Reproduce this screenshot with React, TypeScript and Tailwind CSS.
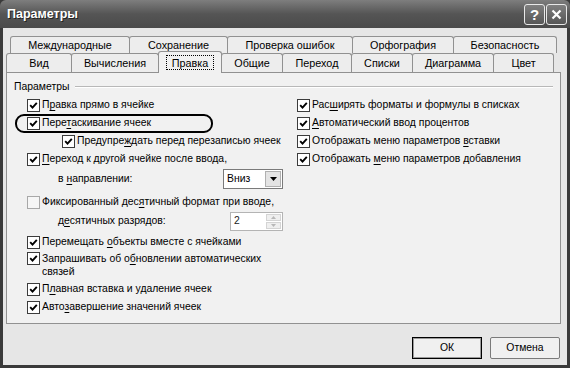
import React from "react";

const U = ({ children }: { children: React.ReactNode }) => (
  <span className="underline underline-offset-[2px] decoration-[1px]">{children}</span>
);

function Check({ checked = true }: { checked?: boolean }) {
  return (
    <span
      className={
        checked
          ? "w-[13px] h-[13px] shrink-0 border border-[#3c3c3c] bg-white flex items-center justify-center"
          : "w-[13px] h-[13px] shrink-0 border border-[#a8a8a8] bg-[#f6f6f6] flex items-center justify-center"
      }
    >
      {checked && (
        <svg width="9" height="9" viewBox="0 0 9 9">
          <path d="M1.2 4.2 L3.5 6.6 L7.8 1.8" stroke="#000" strokeWidth="1.9" fill="none" />
        </svg>
      )}
    </span>
  );
}

function Row({ children, cls = "h-[18px]" }: { children: React.ReactNode; cls?: string }) {
  return <div className={"flex items-center gap-[2px] " + cls}>{children}</div>;
}

const tabs1: [string, string][] = [
  ["Международные", "w-[120px]"],
  ["Сохранение", "w-[99px]"],
  ["Проверка ошибок", "w-[126px]"],
  ["Орфография", "w-[102px]"],
  ["Безопасность", "w-[104px]"],
];

const tabs2: [string, string][] = [
  ["Вид", "w-[66px]"],
  ["Вычисления", "w-[88px]"],
  ["Правка", "w-[64px]"],
  ["Общие", "w-[62px]"],
  ["Переход", "w-[70px]"],
  ["Списки", "w-[62px]"],
  ["Диаграмма", "w-[82px]"],
  ["Цвет", "w-[61px]"],
];

export default function App() {
  return (
    <div
      className="w-[570px] h-[368px] bg-[#3a3a3a] flex flex-col text-[10.4px] text-black overflow-hidden"
      style={{ fontFamily: '"Liberation Sans", Arial, sans-serif' }}
    >
      {/* Title bar */}
      <div className="h-[28px] shrink-0 flex items-center justify-between pl-[7px] pr-[3px] bg-gradient-to-b from-[#7e7e7e] via-[#555555] to-[#4a4a4a] rounded-t-[6px]">
        <span className="text-white font-bold text-[12.5px] [text-shadow:1px_1px_0_#222]">Параметры</span>
        <div className="flex gap-[1px]">
          <div className="w-[21px] h-[21px] rounded-[3px] border border-[#e8e8e8] bg-gradient-to-b from-[#808080] to-[#565656] flex items-center justify-center text-white font-bold text-[15px] leading-none">
            ?
          </div>
          <div className="w-[21px] h-[21px] rounded-[3px] border border-[#e8e8e8] bg-gradient-to-b from-[#808080] to-[#565656] flex items-center justify-center">
            <svg width="11" height="11" viewBox="0 0 11 11">
              <path d="M1.5 1.5 L9.5 9.5 M9.5 1.5 L1.5 9.5" stroke="#fff" strokeWidth="2.2" />
            </svg>
          </div>
        </div>
      </div>

      {/* Body */}
      <div className="flex-1 mx-[3px] mb-[3px] bg-[#e6e6e6] flex flex-col pt-[8px] pr-[6px]">
        {/* Tab row 1 */}
        <div className="flex h-[17px] ml-[7px] text-[10.8px]">
          {tabs1.map(([t, w]) => (
            <div
              key={t}
              className={w + " -mr-px border-t border-l border-r border-[#919191] rounded-t-[3px] bg-[#ededed] flex items-center justify-center"}
            >
              {t}
            </div>
          ))}
        </div>
        {/* Tab row 2 */}
        <div className="flex items-end h-[19px] ml-[3px] relative z-10 text-[10.8px]">
          {tabs2.map(([t, w]) =>
            t === "Правка" ? (
              <div
                key={t}
                className={w + " h-[22px] -mr-px -mb-px border-t border-l border-r border-[#919191] rounded-t-[3px] bg-[#f1f1f1] flex items-center justify-center"}
              >
                <span className="border border-dotted border-black px-[5px] leading-[12px] pt-px">{t}</span>
              </div>
            ) : (
              <div
                key={t}
                className={w + " h-[19px] -mr-px border-t border-l border-r border-[#919191] rounded-t-[3px] bg-[#ededed] flex items-center justify-center"}
              >
                {t}
              </div>
            )
          )}
        </div>

        {/* Panel */}
        <div className="ml-[3px] h-[252px] border border-[#919191] bg-[#f1f1f1] pt-[5px]">
          {/* header */}
          <div className="h-[18px] flex items-center pl-[7px] pr-[7px]">
            <span>Параметры</span>
            <div className="flex-1 ml-[6px] border-t border-[#b8b8b8] border-b-white border-b" />
          </div>
          <div className="flex">
            {/* left column */}
            <div className="w-[290px] pl-[20px] flex flex-col">
              <Row>
                <Check />
                <span>
                  П<U>р</U>авка прямо в ячейке
                </span>
              </Row>
              <Row cls="h-[18px] relative">
                <Check />
                <span>
                  Пере<U>т</U>аскивание ячеек
                </span>
                <div className="absolute left-[-12px] top-[0px] w-[198px] h-[19px] border-2 border-black rounded-[9px]" />
              </Row>
              <Row cls="h-[18px] pl-[35px]">
                <Check />
                <span>
                  Предупре<U>ж</U>дать перед перезаписью ячеек
                </span>
              </Row>
              <Row>
                <Check />
                <span>
                  <U>П</U>ереход к другой ячейке после ввода,
                </span>
              </Row>
              <div className="h-[22px] flex items-center pl-[31px]">
                <span className="w-[165px]">
                  в <U>н</U>аправлении:
                </span>
                <div className="w-[60px] h-[20px] border border-[#7a7a7a] bg-white flex items-center p-px">
                  <span className="flex-1 pl-[2px]">Вниз</span>
                  <div className="w-[16px] h-full bg-[#e4e4e4] border border-[#b0b0b0] flex items-center justify-center">
                    <svg width="7" height="4" viewBox="0 0 7 4">
                      <path d="M0 0 H7 L3.5 4 Z" fill="#000" />
                    </svg>
                  </div>
                </div>
              </div>
              <Row cls="h-[18px] mt-[3px]">
                <Check checked={false} />
                <span>
                  Фиксированный дес<U>я</U>тичный формат при вводе,
                </span>
              </Row>
              <div className="h-[20px] flex items-center pl-[31px]">
                <span className="w-[172px]">
                  д<U>е</U>сятичных разрядов:
                </span>
                <div className="w-[53px] h-[19px] border border-[#b4b4b4] bg-white flex items-center p-px">
                  <span className="flex-1 pl-[2px] text-[#222]">2</span>
                  <div className="w-[15px] h-full flex flex-col gap-px">
                    <div className="flex-1 bg-[#efefef] border border-[#d4d4d4] flex items-center justify-center">
                      <svg width="5" height="3" viewBox="0 0 5 3">
                        <path d="M0 3 H5 L2.5 0 Z" fill="#b8b8b8" />
                      </svg>
                    </div>
                    <div className="flex-1 bg-[#efefef] border border-[#d4d4d4] flex items-center justify-center">
                      <svg width="5" height="3" viewBox="0 0 5 3">
                        <path d="M0 0 H5 L2.5 3 Z" fill="#b8b8b8" />
                      </svg>
                    </div>
                  </div>
                </div>
              </div>
              <Row cls="h-[18px] mt-[2px]">
                <Check />
                <span>
                  Перемещать <U>о</U>бъекты вместе с ячейками
                </span>
              </Row>
              <div className="flex items-start gap-[2px] leading-[13px] mt-[1px]">
                <Check />
                <div className="flex flex-col">
                  <span>
                    Запрашивать об о<U>б</U>новлении автоматических
                  </span>
                  <span>связей</span>
                </div>
              </div>
              <Row cls="h-[18px] mt-[2px]">
                <Check />
                <span>
                  П<U>л</U>авная вставка и удаление ячеек
                </span>
              </Row>
              <Row>
                <Check />
                <span>
                  Авто<U>з</U>авершение значений ячеек
                </span>
              </Row>
            </div>
            {/* right column */}
            <div className="flex-1 flex flex-col">
              <Row>
                <Check />
                <span>
                  Рас<U>ш</U>ирять форматы и формулы в списках
                </span>
              </Row>
              <Row>
                <Check />
                <span>
                  <U>А</U>втоматический ввод процентов
                </span>
              </Row>
              <Row>
                <Check />
                <span>
                  Отображать меню параметров <U>в</U>ставки
                </span>
              </Row>
              <Row>
                <Check />
                <span>
                  Отображать <U>м</U>еню параметров добавления
                </span>
              </Row>
            </div>
          </div>
        </div>

        {/* Buttons */}
        <div className="flex justify-end gap-[8px] mt-[13px] pr-[1px]">
          <div className="w-[70px] h-[22px] border border-black bg-[#f0f0f0] flex items-center justify-center shadow-[inset_0_0_0_1px_#9a9a9a]">
            ОК
          </div>
          <div className="w-[70px] h-[22px] border border-[#7a7a7a] bg-[#f0f0f0] rounded-[2px] flex items-center justify-center">
            Отмена
          </div>
        </div>
      </div>
    </div>
  );
}
